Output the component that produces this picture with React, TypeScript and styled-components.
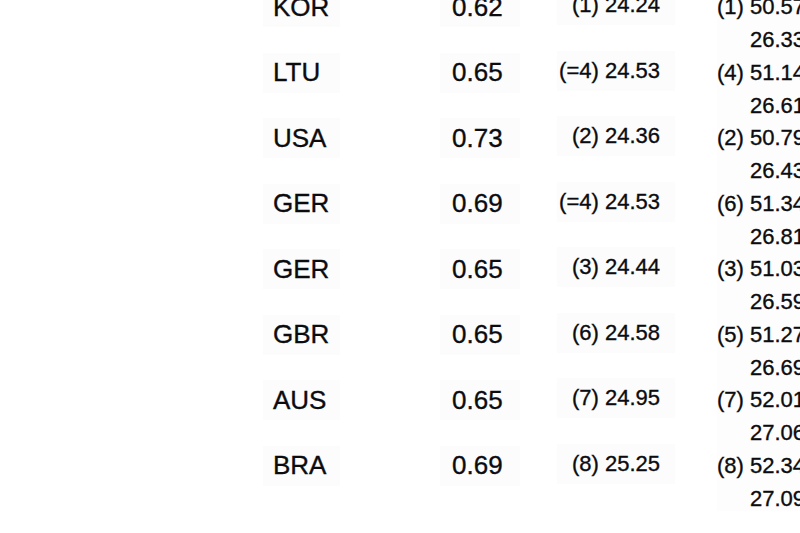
import styled, { createGlobalStyle } from "styled-components";

const GlobalStyle = createGlobalStyle`
  html, body {
    margin: 0;
    padding: 0;
    background: #ffffff;
    overflow: hidden;
  }
  body {
    font-family: "Liberation Sans", Arial, sans-serif;
    color: #0c0c10;
    -webkit-text-stroke: 0.35px #0c0c10;
  }
`;

interface Result {
  nation: string;
  reaction: string;
  semi: string;
  split: string;
  final: string;
}

const results: Result[] = [
  { nation: "KOR", reaction: "0.62", semi: "(1) 24.24", split: "(1) 50.57", final: "26.33" },
  { nation: "LTU", reaction: "0.65", semi: "(=4) 24.53", split: "(4) 51.14", final: "26.61" },
  { nation: "USA", reaction: "0.73", semi: "(2) 24.36", split: "(2) 50.79", final: "26.43" },
  { nation: "GER", reaction: "0.69", semi: "(=4) 24.53", split: "(6) 51.34", final: "26.81" },
  { nation: "GER", reaction: "0.65", semi: "(3) 24.44", split: "(3) 51.03", final: "26.59" },
  { nation: "GBR", reaction: "0.65", semi: "(6) 24.58", split: "(5) 51.27", final: "26.69" },
  { nation: "AUS", reaction: "0.65", semi: "(7) 24.95", split: "(7) 52.01", final: "27.06" },
  { nation: "BRA", reaction: "0.69", semi: "(8) 25.25", split: "(8) 52.34", final: "27.09" },
];

function App() {
  return (
    <>
      <GlobalStyle />
      <Sheet>
        {results.map((r, i) => (
          <Row key={i}>
            <NationCell>{r.nation}</NationCell>
            <ReactionCell>{r.reaction}</ReactionCell>
            <SemiCell>{r.semi}</SemiCell>
            <SplitCell>
              <SplitLine>{r.split}</SplitLine>
              <SplitLine>{r.final}</SplitLine>
            </SplitCell>
          </Row>
        ))}
      </Sheet>
    </>
  );
}

const Sheet = styled.div`
  width: 820px;
  margin-top: -13px;
  padding-left: 263px;
  display: flex;
  flex-direction: column;
`;

const Row = styled.div`
  height: 65.5px;
  display: grid;
  grid-template-columns: 177px 117px 148px 120px;
  align-items: start;
`;

const Cell = styled.div`
  height: 40px;
  display: flex;
  align-items: center;
  background: #fbfcfb;
  white-space: nowrap;
  box-sizing: border-box;
`;

const NationCell = styled(Cell)`
  width: 77px;
  padding-left: 10px;
  font-size: 26px;
`;

const ReactionCell = styled(Cell)`
  width: 80px;
  padding-left: 12px;
  font-size: 26px;
`;

const SemiCell = styled(Cell)`
  width: 118px;
  justify-content: flex-end;
  padding-right: 15px;
  margin-top: -2px;
  font-size: 22px;
`;

const SplitCell = styled.div`
  margin-left: 12px;
  padding-top: 3px;
  width: 88px;
  display: flex;
  flex-direction: column;
  align-items: flex-end;
  background: #fcfdfc;
`;

const SplitLine = styled.div`
  font-size: 22px;
  line-height: 33px;
  white-space: nowrap;
`;

export default App;
